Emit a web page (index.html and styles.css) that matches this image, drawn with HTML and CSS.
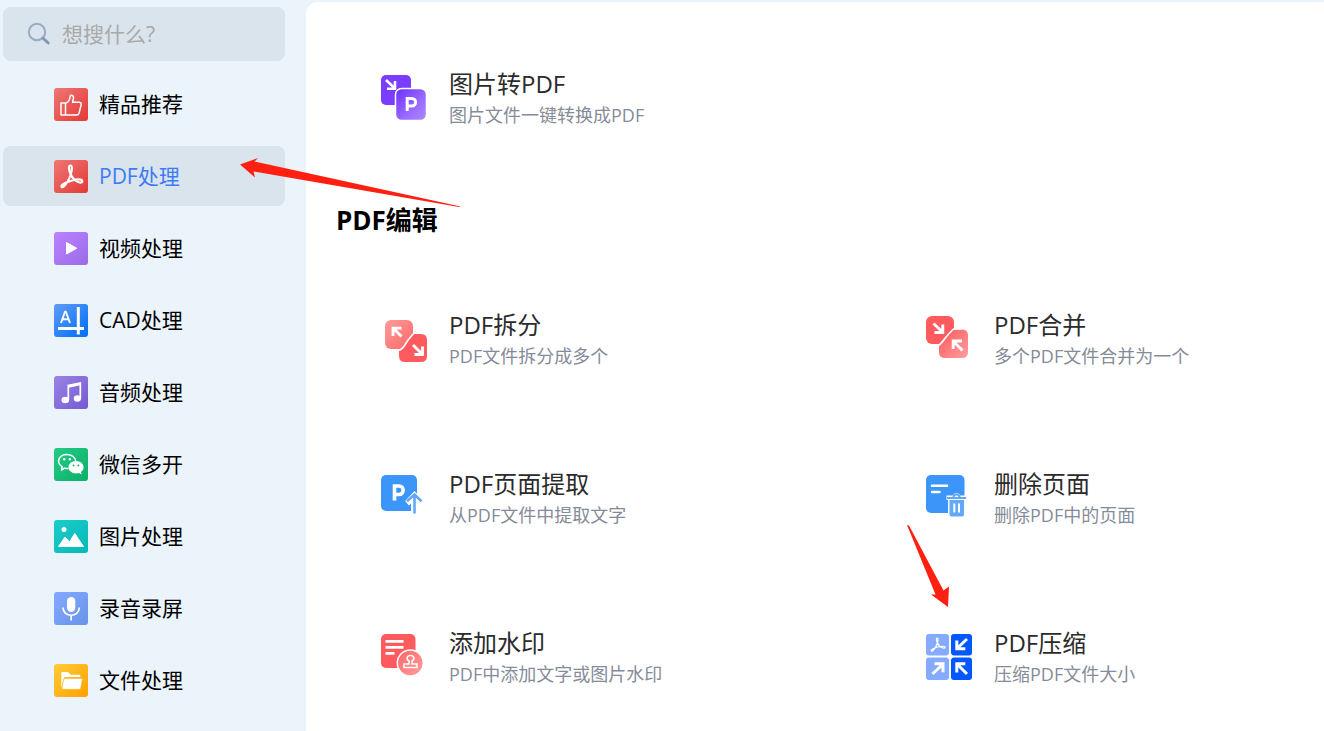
FILE: index.html
```html
<!DOCTYPE html>
<html lang="zh-CN">
<head>
<meta charset="utf-8">
<meta name="viewport" content="width=device-width, initial-scale=1">
<title>PDF处理</title>
<link rel="stylesheet" href="styles.css">
</head>
<body>
<div class="app">
  <aside class="sidebar">
    <label class="search">
      <svg class="search-icon" viewBox="0 0 24 24" aria-hidden="true"><circle cx="10" cy="10" r="8.2" fill="none" stroke="#9aaac3" stroke-width="2"/><path d="M15.8 16l5.4 5" stroke="#8496b5" stroke-width="3" stroke-linecap="round"/></svg>
      <input class="search-input" type="text" placeholder="想搜什么?" aria-label="搜索">
    </label>
    <nav class="nav">
      <a class="nav-item" href="#">
        <svg class="nav-icon" viewBox="0 0 34 33" aria-hidden="true"><defs><linearGradient id="red" x1="0" y1="0" x2="1" y2="1"><stop offset="0" stop-color="#ef7775"/><stop offset="1" stop-color="#e23a36"/></linearGradient></defs><rect width="34" height="33" rx="3" fill="url(#red)"/><path d="M7 15h4.500v12H7zM11.500 15.500c3-1.500 4.500-4 4.700-7.500.8-1.300 3.300-.7 3.300 1.500 0 1.800-.5 3.200-1 4.700h6.800c1.700.2 2.200 1.300 1.800 2.800l-2.200 8.500c-.4 1-1 1.500-2 1.500H11.500" fill="none" stroke="#fff" stroke-width="1.500" stroke-linejoin="round"/></svg>
        <span>精品推荐</span>
      </a>
      <a class="nav-item nav-item-active" href="#" aria-current="page">
        <svg class="nav-icon" viewBox="0 0 34 33" aria-hidden="true"><rect width="34" height="33" rx="3" fill="url(#red)"/><path d="M16.500 5.500c-2.200 0-2 3.500 0 8.500 2 4.500 5 7 8.500 8.300 2.500.8 3.800-.3 3.300-1.500-.7-1.800-6-1.500-11 0-4.500 1.300-9 3.400-9.800 5-.6 1.500 1 2 2.300.8 2.500-2.300 5.200-7.300 7-12.100 1.200-4 1.800-9-.3-9z" fill="none" stroke="#fff" stroke-width="2.100" stroke-linejoin="round"/></svg>
        <span>PDF处理</span>
      </a>
      <a class="nav-item" href="#">
        <svg class="nav-icon" viewBox="0 0 34 33" aria-hidden="true"><defs><linearGradient id="purple" x1="0" y1="0" x2="1" y2="1"><stop offset="0" stop-color="#bb83ff"/><stop offset="1" stop-color="#9a6be8"/></linearGradient></defs><rect width="34" height="33" rx="3" fill="url(#purple)"/><path d="M12.500 10.500v11.500l10.300-5.700z" fill="#fff" stroke="#fff" stroke-width="1" stroke-linejoin="round"/></svg>
        <span>视频处理</span>
      </a>
      <a class="nav-item" href="#">
        <svg class="nav-icon" viewBox="0 0 34 33" aria-hidden="true"><defs><linearGradient id="blue" x1="0" y1="0" x2="1" y2="1"><stop offset="0" stop-color="#629bf7"/><stop offset=".8" stop-color="#1177f6"/><stop offset="1" stop-color="#0b70f0"/></linearGradient></defs><rect width="34" height="33" rx="3" fill="url(#blue)"/><path d="M4 24.500h26M24.300 3v27.500" stroke="#fff" stroke-width="3"/><path d="M7 19l4-11.300h.8L16 19M8.500 15.300h6" fill="none" stroke="#fff" stroke-width="1.900"/></svg>
        <span>CAD处理</span>
      </a>
      <a class="nav-item" href="#">
        <svg class="nav-icon" viewBox="0 0 34 33" aria-hidden="true"><defs><linearGradient id="violet" x1="0" y1="0" x2="1" y2="1"><stop offset="0" stop-color="#9b83e5"/><stop offset="1" stop-color="#735bd2"/></linearGradient></defs><rect width="34" height="33" rx="3" fill="url(#violet)"/><path d="M14.300 24V9.500l12-2.500v15.500M14.300 11l12-2.600" fill="none" stroke="#fff" stroke-width="1.700"/><ellipse cx="11.300" cy="24" rx="3.800" ry="3.300" fill="#fff"/><ellipse cx="23.400" cy="22.500" rx="3.600" ry="3.200" fill="#fff"/></svg>
        <span>音频处理</span>
      </a>
      <a class="nav-item" href="#">
        <svg class="nav-icon" viewBox="0 0 34 33" aria-hidden="true"><defs><linearGradient id="green" x1="0" y1="0" x2="1" y2="1"><stop offset="0" stop-color="#22cb85"/><stop offset="1" stop-color="#0caf6a"/></linearGradient></defs><rect width="34" height="33" rx="3" fill="url(#green)"/><path d="M14.500 20.500c-1.500.2-2.800 0-4-.4L7.500 22l.7-3.200C1.500 14 5 6.500 13 6.500c5 0 8.400 3 8.800 6.700" fill="none" stroke="#fff" stroke-width="1.500" stroke-linejoin="round"/><path d="M22 13c4.200 0 7.600 2.800 7.600 6.300 0 2-1 3.500-2.600 4.700l.5 2.500-2.700-1.500c-5.500 1.500-10.300-1.500-10.300-5.700 0-3.500 3.300-6.300 7.500-6.300z" fill="#fff"/><circle cx="10.200" cy="11.300" r="1.200" fill="#fff"/><circle cx="15.900" cy="11.300" r="1.200" fill="#fff"/><circle cx="19.500" cy="17.400" r="1" fill="#17b974"/><circle cx="24.300" cy="17.400" r="1" fill="#17b974"/></svg>
        <span>微信多开</span>
      </a>
      <a class="nav-item" href="#">
        <svg class="nav-icon" viewBox="0 0 34 33" aria-hidden="true"><defs><linearGradient id="teal" x1="0" y1="0" x2="1" y2="1"><stop offset="0" stop-color="#1bcdc9"/><stop offset="1" stop-color="#05b9b7"/></linearGradient></defs><rect width="34" height="33" rx="3" fill="url(#teal)"/><circle cx="10" cy="9.500" r="2.500" fill="#fff"/><path d="M4.500 26.500l6.500-9.500 4.500 5 5.200-8.500 8.800 13z" fill="#fff" stroke="#fff" stroke-width="1" stroke-linejoin="round"/></svg>
        <span>图片处理</span>
      </a>
      <a class="nav-item" href="#">
        <svg class="nav-icon" viewBox="0 0 34 33" aria-hidden="true"><defs><linearGradient id="sky" x1="0" y1="0" x2="1" y2="1"><stop offset="0" stop-color="#86a8ff"/><stop offset="1" stop-color="#6694ea"/></linearGradient></defs><rect width="34" height="33" rx="3" fill="url(#sky)"/><rect x="13" y="5" width="8.300" height="15" rx="4.150" fill="#fff"/><path d="M9 15.500c0 10.300 16.300 10.300 16.300 0M17.150 23.500v5" fill="none" stroke="#fff" stroke-width="1.700"/></svg>
        <span>录音录屏</span>
      </a>
      <a class="nav-item" href="#">
        <svg class="nav-icon" viewBox="0 0 34 33" aria-hidden="true"><defs><linearGradient id="amber" x1="0" y1="0" x2="1" y2="1"><stop offset="0" stop-color="#ffcc38"/><stop offset="1" stop-color="#ffa000"/></linearGradient></defs><rect width="34" height="33" rx="3" fill="url(#amber)"/><path d="M7.300 24.500V9q0-1 1-1h5.500l3 2.700h8.500q1 0 1 1V13H12q-2 0-2.500 1.800z" fill="#fff"/><path d="M11.500 14.500h17L26.700 24q-.3 1.300-1.500 1.300H9q-1.200 0-1-1.200L9.500 16q.4-1.500 2-1.500z" fill="#fff" stroke="#ffb81c" stroke-width=".6"/></svg>
        <span>文件处理</span>
      </a>
    </nav>
  </aside>

  <main class="content">
    <div class="tools">
      <a class="tool" href="#">
        <svg class="tool-icon" viewBox="0 0 48 48" aria-hidden="true"><defs><linearGradient id="lilac" x1="0" y1="0" x2="1" y2="1"><stop offset="0" stop-color="#6b2dff"/><stop offset=".6" stop-color="#9a6cff"/><stop offset="1" stop-color="#ae8aff"/></linearGradient></defs><rect width="30" height="30" rx="5" fill="#7a3cff"/><rect x="14.500" y="13.500" width="31" height="32" rx="6" fill="url(#lilac)" stroke="#fff" stroke-width="1.500"/><path d="M5 5l8.500 8M14 6v7.800H6" fill="none" stroke="#fff" stroke-width="2.600"/><path d="M26.200 36V23.500h4.300c5.500 0 5.500 7.500 0 7.500h-4" fill="none" stroke="#fff" stroke-width="3"/></svg>
        <span class="tool-text"><span class="tool-title">图片转PDF</span><span class="tool-note">图片文件一键转换成PDF</span></span>
      </a>
    </div>

    <h2 class="section-title">PDF编辑</h2>

    <div class="tools">
      <a class="tool" href="#">
        <svg class="tool-icon" viewBox="0 0 48 48" aria-hidden="true"><defs><linearGradient id="coral-left" x1="0" y1="0" x2="1" y2="1"><stop offset="0" stop-color="#ff9c9c"/><stop offset="1" stop-color="#ff6666"/></linearGradient></defs><rect x="4" y="4" width="28" height="29" rx="6" fill="url(#coral-left)"/><path d="M20 33L33 18h7q6 0 6 6v16q0 6-6 6H24q-6 0-6-6v-7z" fill="#ff5a5e"/><path d="M17.500 34.500c3-1 5-3 7-6.500s4.500-6.500 8.500-11" fill="none" stroke="#fff" stroke-width="1.700"/><path d="M20.500 20.500l-8-8M12 20v-7.900h8.500M32 29l9 9M41.500 30.500v8H33.500" fill="none" stroke="#fff" stroke-width="2.900"/></svg>
        <span class="tool-text"><span class="tool-title">PDF拆分</span><span class="tool-note">PDF文件拆分成多个</span></span>
      </a>
      <a class="tool" href="#">
        <svg class="tool-icon" viewBox="0 0 48 48" aria-hidden="true"><defs><linearGradient id="coral-right" x1="0" y1="0" x2="1" y2="1"><stop offset="0" stop-color="#ff5558"/><stop offset="1" stop-color="#ffa0a0"/></linearGradient></defs><rect width="28" height="28" rx="6" fill="#ff5a5e"/><path d="M14 29L27 13.500h9q6 0 6 6V36q0 6-6 6H19q-6 0-6-6v-7z" fill="url(#coral-right)"/><path d="M12.500 29.500c3-2 5.500-6 8-9s4.500-5 7-7.500h8" fill="none" stroke="#fff" stroke-width="1.700"/><path d="M7.500 7.500l8.500 8M16.800 8.500v8H8.500M36.500 34.500l-8.500-8.500M27.200 33v-8H36" fill="none" stroke="#fff" stroke-width="2.900"/></svg>
        <span class="tool-text"><span class="tool-title">PDF合并</span><span class="tool-note">多个PDF文件合并为一个</span></span>
      </a>
      <a class="tool" href="#">
        <svg class="tool-icon" viewBox="0 0 48 48" aria-hidden="true"><rect width="36" height="36" rx="5" fill="#3c96fa"/><path d="M25.500 26l8-8.500 8 8.500-2.500 3-3-3V39.500h-5V26.500L28 29z" fill="#fff" stroke="#fff" stroke-width="2"/><path d="M26 26.300l7.500-6.800 7 6.800M33.500 20v18.500" fill="none" stroke="#62a8fb" stroke-width="2.600"/><path d="M13.500 25.500V11h4.300c5.800 0 5.800 8.500 0 8.500h-4" fill="none" stroke="#fff" stroke-width="3.600"/></svg>
        <span class="tool-text"><span class="tool-title">PDF页面提取</span><span class="tool-note">从PDF文件中提取文字</span></span>
      </a>
      <a class="tool" href="#">
        <svg class="tool-icon" viewBox="0 0 48 48" aria-hidden="true"><rect width="38.500" height="38" rx="5" fill="#3c96fa"/><path d="M6 10.800h15M6 17h7.500" stroke="#fff" stroke-width="2.600" stroke-linecap="round"/><path d="M20.500 20.500h6q1-2.500 4-2.500t4 2.500h6V25h-1.500v17.500H22V25h-1.500z" fill="#fff"/><path d="M21 23h19M27.500 22q0-2.500 3-2.500t3 2.500" fill="none" stroke="#62a8fb" stroke-width="2"/><path d="M23.500 25h14.500v14.500q0 2-2 2H25.500q-2 0-2-2z" fill="#62a8fb"/><path d="M28.300 28.500v9M33 28.500v9" stroke="#fff" stroke-width="2"/></svg>
        <span class="tool-text"><span class="tool-title">删除页面</span><span class="tool-note">删除PDF中的页面</span></span>
      </a>
      <a class="tool" href="#">
        <svg class="tool-icon" viewBox="0 0 48 48" aria-hidden="true"><defs><linearGradient id="stamp" x1="0" y1="0" x2="1" y2="1"><stop offset="0" stop-color="#ff6466"/><stop offset="1" stop-color="#ffa0a0"/></linearGradient></defs><rect width="34.500" height="34" rx="5" fill="#ff5a5e"/><path d="M4.500 7.300h18M4.500 13.300h18M4.500 19.300h9" stroke="#fff" stroke-width="2.700"/><circle cx="29.300" cy="29" r="13" fill="url(#stamp)" stroke="#fff" stroke-width="1.500"/><path d="M28 27c-3.300-2-2-5.500 1.500-5.500s4.800 3.500 1.500 5.500v3h5v3.500H23V30h5z" fill="none" stroke="#fff" stroke-width="1.500"/></svg>
        <span class="tool-text"><span class="tool-title">添加水印</span><span class="tool-note">PDF中添加文字或图片水印</span></span>
      </a>
      <a class="tool" href="#">
        <svg class="tool-icon" viewBox="0 0 48 48" aria-hidden="true"><rect width="23" height="21.500" rx="3" fill="#84abff"/><rect x="25" width="21" height="21.500" rx="3" fill="#0257ff"/><rect y="23.500" width="23" height="22.500" rx="3" fill="#84abff"/><rect x="25" y="23.500" width="21" height="22.500" rx="3" fill="#0257ff"/><circle cx="24" cy="22.500" r="2.500" fill="#fff"/><path d="M11.300 4c-1.300 0-1 2 0 4.500 1.300 3 3 4.600 5.500 5.500 1.800.4 2.600-.2 2.200-1-.5-1-4-.8-7.300 0-3 .8-6 2.200-6.400 3.300-.3.900.7 1.200 1.500.5 1.600-1.500 3.600-4.800 4.600-7.800.8-2.600 1.100-5-.1-5z" fill="none" stroke="#fff" stroke-width="1.200"/><path d="M41 5L32 13.500M30.800 6.500v8.300h8.500M6.500 40L16 31M8.500 29.700h8.500v8.500M41 40L32 31M30.800 38.500v-8.700h8.500" fill="none" stroke="#fff" stroke-width="3"/></svg>
        <span class="tool-text"><span class="tool-title">PDF压缩</span><span class="tool-note">压缩PDF文件大小</span></span>
      </a>
    </div>
  </main>

  <svg class="pointer pointer-nav" viewBox="0 0 222 52" aria-hidden="true"><path d="M0 9.500L18 3 14.500 6.500 220.500 51.500 L219 52 13.500 16.500 15 22.500z" fill="#ff2012"/></svg>
  <svg class="pointer pointer-tool" viewBox="0 0 44 84" aria-hidden="true"><path d="M0 0L2 .5 36.500 65.500 42 61.500 41 82 24 69.500H28.500z" fill="#ff2012"/></svg>
</div>
</body>
</html>
```
FILE: styles.css
```css
* {
  box-sizing: border-box;
}

body {
  margin: 0;
  background: #ebf3fb;
  color: #000;
  font-family: "Open Sans", "Noto Sans CJK SC", sans-serif;
  font-weight: 370;
}

a {
  color: inherit;
  text-decoration: none;
}

.app {
  position: relative;
  display: grid;
  grid-template-columns: 306px minmax(0, 1fr);
  min-height: 100vh;
  overflow: hidden;
}

.sidebar {
  padding: 7px 21px 0 3px;
}

.search {
  display: flex;
  align-items: center;
  gap: 11px;
  height: 54px;
  padding: 0 24px;
  border-radius: 8px;
  background: #dae4ec;
}

.search-icon {
  flex: none;
  width: 24px;
  height: 24px;
}

.search-input {
  flex: 1;
  min-width: 0;
  padding: 0;
  border: 0;
  outline: 0;
  background: none;
  color: #333;
  font: inherit;
  font-size: 21px;
}

.search-input::placeholder {
  color: #a9a9a9;
  opacity: 1;
}

.nav {
  display: grid;
  gap: 12px;
  margin-top: 13px;
}

.nav-item {
  display: flex;
  align-items: center;
  gap: 11px;
  height: 60px;
  padding-left: 51px;
  border-radius: 8px;
  font-size: 21px;
  line-height: 32px;
}

.nav-item-active {
  background: #dae4ec;
  color: #3d7af5;
}

.nav-icon {
  flex: none;
  width: 34px;
  height: 33px;
}

.content {
  margin-top: 2px;
  padding: 66px 0 0 30px;
  border-top-left-radius: 12px;
  background: #fff;
}

.tools {
  display: grid;
  grid-template-columns: repeat(2, minmax(0, 1fr));
  gap: 97px 147px;
  padding-left: 45px;
}

.tool {
  display: flex;
  align-items: center;
  gap: 20px;
}

.tool-icon {
  flex: none;
  width: 48px;
  height: 48px;
}

.tool-text {
  display: grid;
  white-space: nowrap;
}

.tool-title {
  color: #2b2b2b;
  font-size: 24px;
  line-height: 32px;
}

.tool-note {
  color: #858b98;
  font-size: 18px;
  line-height: 30px;
}

.section-title {
  margin: 72px 0 71px;
  font-size: 26px;
  font-weight: 700;
  line-height: 36px;
}

.pointer {
  position: absolute;
  pointer-events: none;
}

.pointer-nav {
  top: 155px;
  left: 240px;
  width: 222px;
  height: 52px;
}

.pointer-tool {
  top: 525px;
  left: 907px;
  width: 44px;
  height: 84px;
}
```
